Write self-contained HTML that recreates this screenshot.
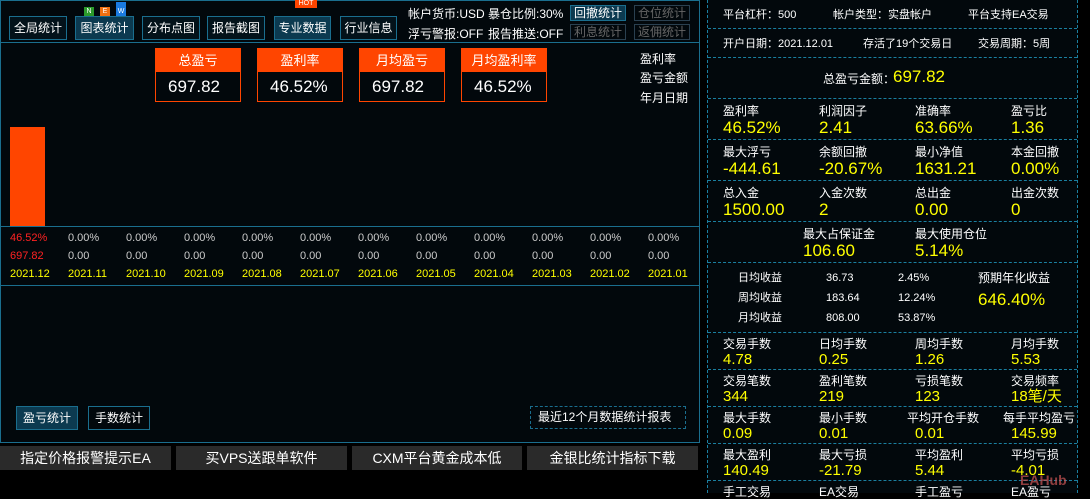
<!DOCTYPE html><html><head><meta charset="utf-8"><style>
*{margin:0;padding:0;box-sizing:border-box}
body{width:1090px;height:493px;background:#000;font-family:"Liberation Sans","Noto Sans CJK SC",sans-serif;color:#fff;position:relative;overflow:hidden;font-size:12px}
.a{position:absolute;white-space:nowrap}
.btn{position:absolute;top:16px;height:24px;border:1px solid #1a6e8e;background:#03121a;color:#fff;font-size:12px;line-height:22px;text-align:center}
.btn.on{background:#0c3a50}
.sb{position:absolute;height:16px;border:1px solid #1a6e8e;font-size:12px;line-height:14px;text-align:center;background:#0c3a50}
.sb.dis{background:transparent;border-color:#2a4050;color:#666}
.card{position:absolute;top:48px;width:86px;height:54px;border:1px solid #ff4500;background:#02080c}
.card div:first-child{background:#ff4500;height:23px;line-height:23px;text-align:center;font-size:13px}
.card div:last-child{font-size:17px;line-height:30px;padding-left:12px}
.r{color:#f22}.y{color:#ff0}.g{color:#ccc}
.rp{position:absolute;left:708px;width:369px;border-bottom:1px dashed #1a7fa0}
.lbl{position:absolute;font-size:12px;color:#fff;line-height:14px;white-space:nowrap}
.val{position:absolute;font-size:17px;color:#ff0;line-height:18px;white-space:nowrap}
.bb{position:absolute;top:446px;height:24px;background:#2a2a2a;color:#fff;font-size:14px;line-height:24px;text-align:center}
</style></head><body>
<div class="a" style="left:0;top:0;width:700px;height:443px;background:#02080c;border:1px solid #1a6e8e"></div>
<div class="a" style="left:0;top:42px;width:700px;height:1px;background:#1a6e8e"></div>
<div class="btn" style="left:9px;width:58px">全局统计</div>
<div class="btn on" style="left:75px;width:59px">图表统计</div>
<div class="a" style="left:84px;top:7px;width:10px;height:9px;background:#2a9a2a;font-size:7px;line-height:9px;text-align:center">N</div>
<div class="a" style="left:100px;top:7px;width:10px;height:9px;background:#f07010;font-size:7px;line-height:9px;text-align:center">E</div>
<div class="a" style="left:116px;top:2px;width:10px;height:14px;background:#1a7ae0;font-size:7px;line-height:20px;text-align:center">W</div>
<div class="btn" style="left:142px;width:58px">分布点图</div>
<div class="btn" style="left:207px;width:58px">报告截图</div>
<div class="btn on" style="left:274px;width:57px">专业数据</div>
<div class="a" style="left:295px;top:0;width:22px;height:8px;background:#ff4500;font-size:7px;line-height:8px;text-align:center">HOT</div>
<div class="btn" style="left:340px;width:57px">行业信息</div>
<div class="a" style="left:408px;top:5px">帐户货币:USD</div>
<div class="a" style="left:488px;top:5px">暴仓比例:30%</div>
<div class="a" style="left:408px;top:25px">浮亏警报:OFF</div>
<div class="a" style="left:488px;top:25px">报告推送:OFF</div>
<div class="sb" style="left:570px;top:5px;width:56px">回撤统计</div>
<div class="sb dis" style="left:634px;top:5px;width:56px">仓位统计</div>
<div class="sb dis" style="left:570px;top:24px;width:56px">利息统计</div>
<div class="sb dis" style="left:634px;top:24px;width:56px">返佣统计</div>
<div class="card" style="left:155px"><div>总盈亏</div><div>697.82</div></div>
<div class="card" style="left:257px"><div>盈利率</div><div>46.52%</div></div>
<div class="card" style="left:359px"><div>月均盈亏</div><div>697.82</div></div>
<div class="card" style="left:461px"><div>月均盈利率</div><div>46.52%</div></div>
<div class="a" style="left:640px;top:50px">盈利率</div>
<div class="a" style="left:640px;top:69px">盈亏金额</div>
<div class="a" style="left:640px;top:89px">年月日期</div>
<div class="a" style="left:10px;top:127px;width:35px;height:100px;background:#ff4500"></div>
<div class="a" style="left:0;top:226px;width:700px;height:1px;background:#1a6e8e"></div>
<div class="a" style="left:0;top:285px;width:700px;height:1px;background:#1a6e8e"></div>
<div id="months"></div>
<div class="a" style="left:16px;top:406px;width:62px;height:24px;border:1px solid #1a6e8e;background:#0c3a50;line-height:22px;text-align:center">盈亏统计</div>
<div class="a" style="left:88px;top:406px;width:62px;height:24px;border:1px solid #1a6e8e;line-height:22px;text-align:center">手数统计</div>
<div class="a" style="left:530px;top:406px;width:156px;height:23px;border:1px dashed #1a6e8e;line-height:21px;padding-left:7px">最近12个月数据统计报表</div>
<div class="bb" style="left:0;width:171px">指定价格报警提示EA</div>
<div class="bb" style="left:176px;width:171px">买VPS送跟单软件</div>
<div class="bb" style="left:352px;width:170px">CXM平台黄金成本低</div>
<div class="bb" style="left:527px;width:171px">金银比统计指标下载</div>
<div class="a" style="left:707px;top:0;width:371px;height:493px;background:#02080c;border-left:1px dashed #1a7fa0;border-right:1px dashed #1a7fa0"></div>
<div class="rp" style="top:0;height:29px"></div>
<div class="rp" style="top:29px;height:29px"></div>
<div class="rp" style="top:58px;height:41px"></div>
<div class="rp" style="top:99px;height:41px"></div>
<div class="rp" style="top:140px;height:41px"></div>
<div class="rp" style="top:181px;height:41px"></div>
<div class="rp" style="top:222px;height:41px"></div>
<div class="rp" style="top:263px;height:70px"></div>
<div class="rp" style="top:333px;height:37px"></div>
<div class="rp" style="top:370px;height:37px"></div>
<div class="rp" style="top:407px;height:37px"></div>
<div class="rp" style="top:444px;height:37px"></div>
<div class="lbl" style="left:723px;top:8px;font-size:11px">平台杠杆：500</div>
<div class="lbl" style="left:833px;top:8px;font-size:11px">帐户类型：实盘帐户</div>
<div class="lbl" style="left:968px;top:8px;font-size:11px">平台支持EA交易</div>
<div class="lbl" style="left:723px;top:37px;font-size:11px">开户日期：2021.12.01</div>
<div class="lbl" style="left:863px;top:37px;font-size:11px">存活了19个交易日</div>
<div class="lbl" style="left:978px;top:37px;font-size:11px">交易周期：5周</div>
<div class="lbl" style="left:823px;top:72px">总盈亏金额：</div>
<div class="val" style="left:893px;top:68px">697.82</div>
<div id="grid"></div>
<div class="lbl" style="left:738px;top:271px;font-size:11px">日均收益</div><div class="lbl g" style="left:826px;top:271px;font-size:11px">36.73</div><div class="lbl g" style="left:898px;top:271px;font-size:11px">2.45%</div>
<div class="lbl" style="left:738px;top:291px;font-size:11px">周均收益</div><div class="lbl g" style="left:826px;top:291px;font-size:11px">183.64</div><div class="lbl g" style="left:898px;top:291px;font-size:11px">12.24%</div>
<div class="lbl" style="left:738px;top:311px;font-size:11px">月均收益</div><div class="lbl g" style="left:826px;top:311px;font-size:11px">808.00</div><div class="lbl g" style="left:898px;top:311px;font-size:11px">53.87%</div>
<div class="lbl" style="left:978px;top:271px">预期年化收益</div>
<div class="val" style="left:978px;top:291px">646.40%</div>
<div class="a" style="left:1020px;top:472px;color:#c55;font-size:14px;font-weight:bold;opacity:.7">EAHub</div>
<script>
var m='',ms=['12','11','10','09','08','07','06','05','04','03','02','01'];
for(var i=0;i<12;i++){var x=10+i*58;
m+='<div class="a '+(i?'g':'r')+'" style="left:'+x+'px;top:232px;font-size:11px">'+(i?'0.00%':'46.52%')+'</div>';
m+='<div class="a '+(i?'g':'r')+'" style="left:'+x+'px;top:250px;font-size:11px">'+(i?'0.00':'697.82')+'</div>';
m+='<div class="a y" style="left:'+x+'px;top:268px;font-size:11px">2021.'+ms[i]+'</div>';}
document.getElementById('months').innerHTML=m;
var rows=[[99,[['盈利率','46.52%'],['利润因子','2.41'],['准确率','63.66%'],['盈亏比','1.36']]],
[140,[['最大浮亏','-444.61'],['余额回撤','-20.67%'],['最小净值','1631.21'],['本金回撤','0.00%']]],
[181,[['总入金','1500.00'],['入金次数','2'],['总出金','0.00'],['出金次数','0']]],
[333,[['交易手数','4.78'],['日均手数','0.25'],['周均手数','1.26'],['月均手数','5.53']]],
[370,[['交易笔数','344'],['盈利笔数','219'],['亏损笔数','123'],['交易频率','18笔/天']]],
[407,[['最大手数','0.09'],['最小手数','0.01'],['平均开仓手数','0.01'],['每手平均盈亏','145.99']]],
[444,[['最大盈利','140.49'],['最大亏损','-21.79'],['平均盈利','5.44'],['平均亏损','-4.01']]],
[481,[['手工交易',''],['EA交易',''],['手工盈亏',''],['EA盈亏','']]]];
var xs=[723,819,915,1011],g='';
rows.forEach(function(r){var big=r[0]<300;r[1].forEach(function(c,j){var x=xs[j];if(c[0]=='平均开仓手数')x=907;if(c[0]=='每手平均盈亏')x=1003;
g+='<div class="lbl" style="left:'+x+'px;top:'+(r[0]+(big?5:4))+'px">'+c[0]+'</div>';
g+='<div class="val" style="left:'+xs[j]+'px;top:'+(r[0]+(big?20:18))+'px;font-size:'+(big?17:15)+'px">'+c[1]+'</div>';});});
g+='<div class="lbl" style="left:803px;top:227px">最大占保证金</div><div class="val" style="left:803px;top:242px">106.60</div>';
g+='<div class="lbl" style="left:915px;top:227px">最大使用仓位</div><div class="val" style="left:915px;top:242px">5.14%</div>';
document.getElementById('grid').innerHTML=g;
</script>
</body></html>
